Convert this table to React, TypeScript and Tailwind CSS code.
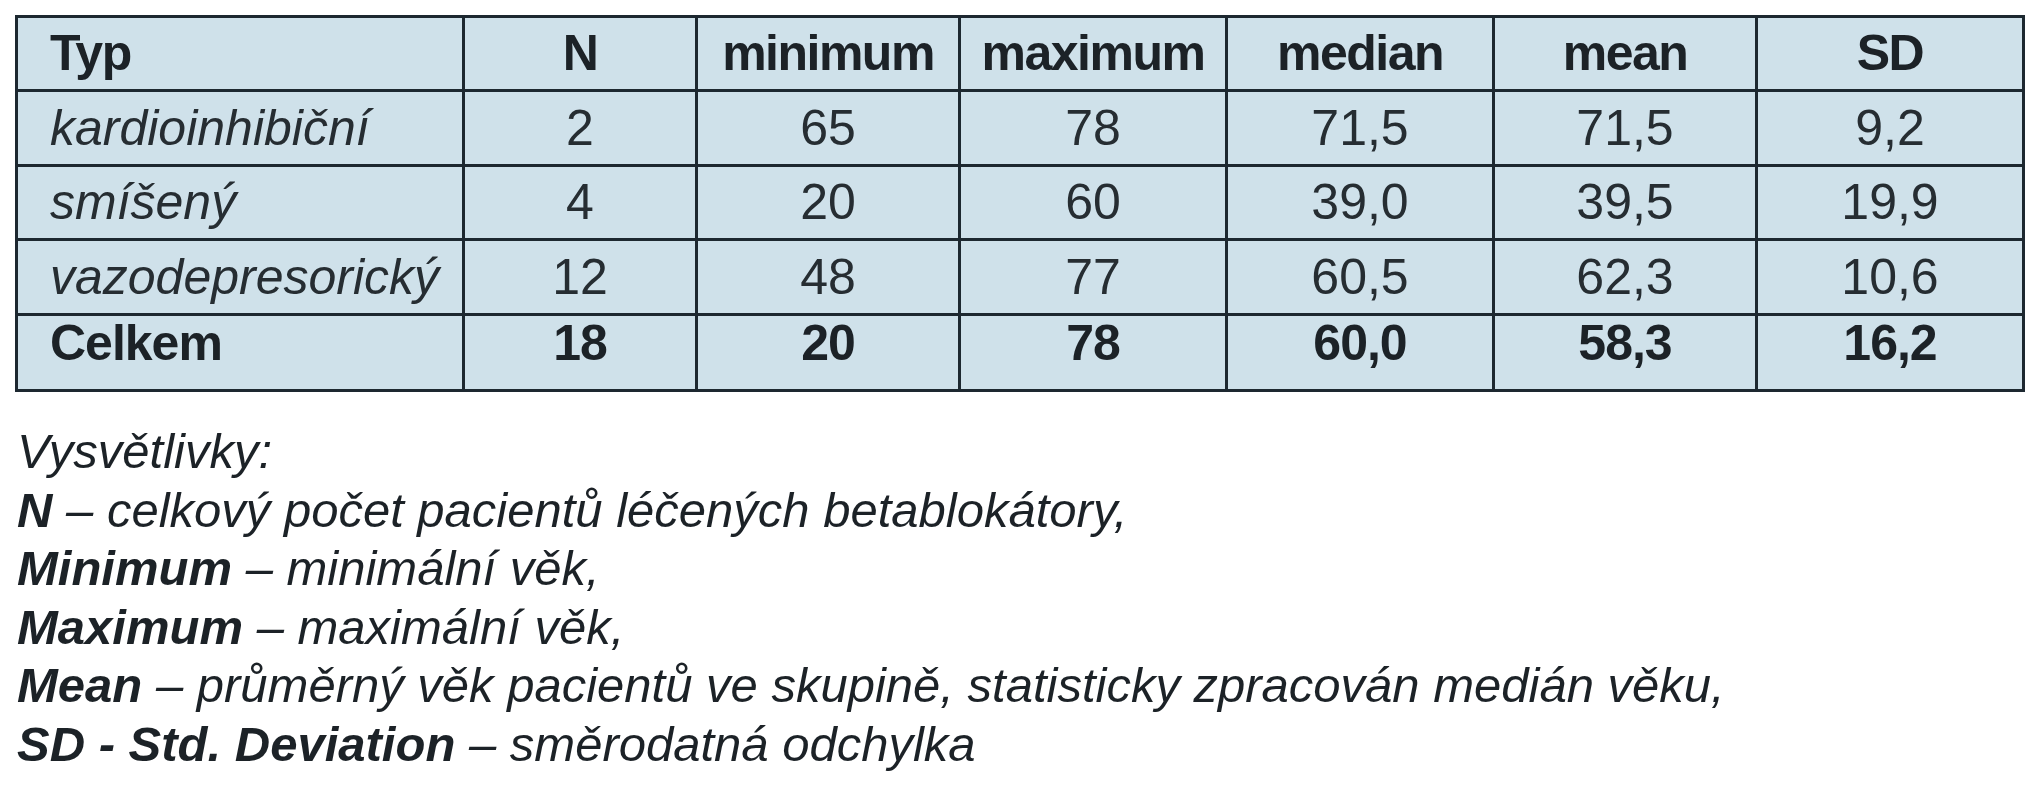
const COLS = ["Typ", "N", "minimum", "maximum", "median", "mean", "SD"]

const ROWS = [
  ["kardioinhibiční", "2", "65", "78", "71,5", "71,5", "9,2"],
  ["smíšený", "4", "20", "60", "39,0", "39,5", "19,9"],
  ["vazodepresorický", "12", "48", "77", "60,5", "62,3", "10,6"],
]

const TOTAL = ["Celkem", "18", "20", "78", "60,0", "58,3", "16,2"]

const LEGEND = [
  { term: "N", text: "celkový počet pacientů léčených betablokátory," },
  { term: "Minimum", text: "minimální věk," },
  { term: "Maximum", text: "maximální věk," },
  { term: "Mean", text: "průměrný věk pacientů ve skupině, statisticky zpracován medián věku," },
  { term: "SD - Std. Deviation", text: "směrodatná odchylka" },
]

export default function App() {
  return (
    <div className="min-h-screen bg-white font-['Liberation_Sans',Arial,sans-serif] text-[#1c2227]">
      {/* Table */}
      <div className="ml-[15px] pt-[15px]">
        <div className="grid w-[2010px] grid-cols-[444px_230px_260px_264px_264px_260px_264px] grid-rows-[71px_72px_71px_72px_73px] gap-[3px] bg-[#1d2830] p-[3px]">
          {COLS.map((c, i) => (
            <div
              key={c}
              className={`flex items-center bg-[#cfe1ea] text-[50px] font-bold tracking-[-0.03em] ${i === 0 ? "pl-[32px]" : "justify-center"}`}
            >
              {c}
            </div>
          ))}
          {ROWS.map((row) =>
            row.map((cell, i) => (
              <div
                key={row[0] + i}
                className={`flex items-center bg-[#cfe1ea] text-[50px] text-[#262d32] ${i === 0 ? "pl-[32px] italic" : "justify-center"}`}
              >
                {cell}
              </div>
            ))
          )}
          {TOTAL.map((cell, i) => (
            <div
              key={"t" + i}
              className={`flex items-center bg-[#cfe1ea] pb-[18px] text-[50px] font-bold tracking-[-0.02em] ${i === 0 ? "pl-[32px]" : "justify-center"}`}
            >
              {cell}
            </div>
          ))}
        </div>
      </div>

      {/* Legend */}
      <div className="ml-[17px] mt-[30px] text-[49px] leading-[58.5px] italic">
        <p>Vysvětlivky:</p>
        {LEGEND.map((l) => (
          <p key={l.term}>
            <span className="font-bold">{l.term}</span> – {l.text}
          </p>
        ))}
      </div>
    </div>
  )
}
